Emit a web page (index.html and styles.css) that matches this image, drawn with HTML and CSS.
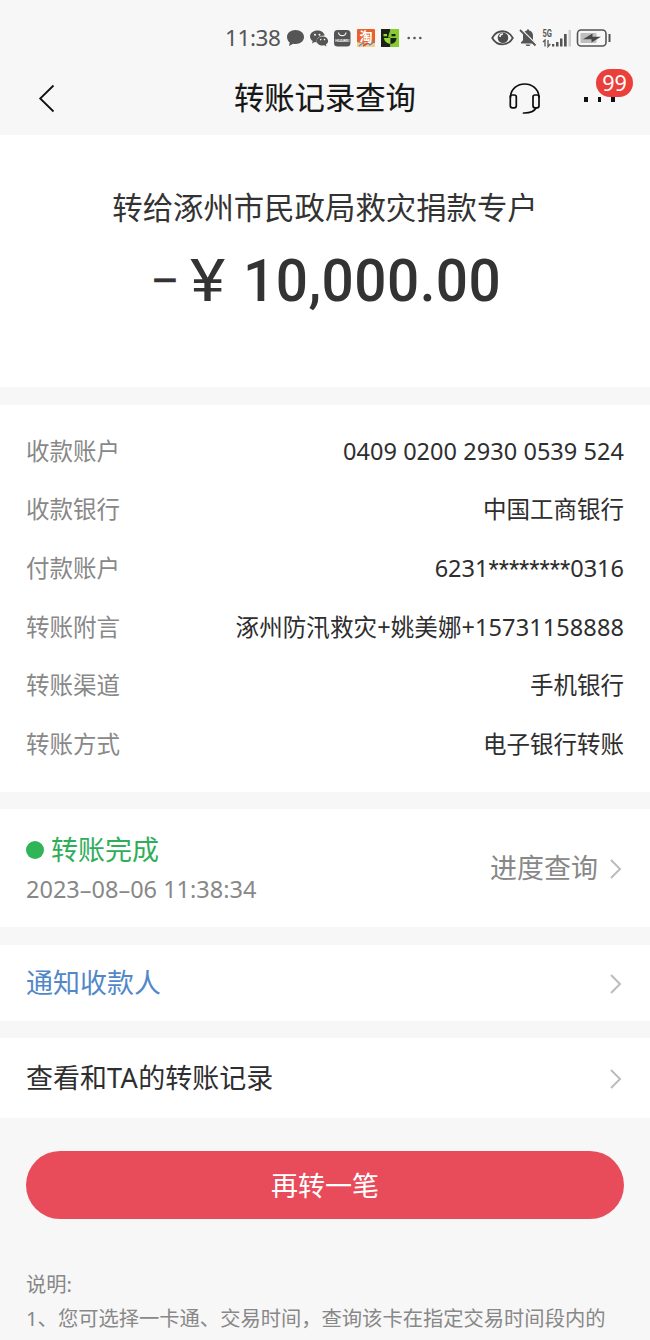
FILE: index.html
```html
<!DOCTYPE html>
<html lang="zh-CN">
<head>
<meta charset="utf-8">
<title>转账记录查询</title>
<link rel="stylesheet" href="styles.css">
</head>
<body>
<main class="screen">
  <header class="top">
    <div class="status">
      <span class="clock">11:38</span>
      <svg class="status-apps" width="140" height="24" viewBox="0 0 140 24">
        <g fill="#555">
          <path d="M9.500 4C4.500 4 1 7.100 1 11c0 2.200 1 4.200 2.700 5.500L3 20l4.200-2.200c.7.200 1.500.2 2.300.2 5 0 8.500-3.100 8.500-7S14.500 4 9.500 4z"/>
          <path d="M31.500 4.500c-4.200 0-7.500 2.600-7.500 6 0 1.900 1 3.500 2.700 4.600l-.7 2.400 2.800-1.400 2 .4c-.9-4.400 2.700-7.300 7.900-7.100-.8-2.900-3.700-4.900-7.200-4.900z"/>
          <path d="M36.500 10.500c-3.400 0-5.800 2-5.800 4.600s2.400 4.500 5.800 4.500l1.800-.3 2.100 1.100-.5-1.900c1.400-.8 2.200-2 2.200-3.400 0-2.600-2.400-4.600-5.600-4.600z"/>
          <rect x="48" y="4" width="16.500" height="16.500" rx="3.500"/>
        </g>
        <g fill="#f7f7f7"><circle cx="29" cy="8.700" r="1"/><circle cx="33.500" cy="8.700" r="1"/><circle cx="34.700" cy="13.600" r=".8"/><circle cx="38.500" cy="13.600" r=".8"/></g>
        <path d="M52.500 6.500c.5 4.200 7 4.200 7.500 0" fill="none" stroke="#f7f7f7" stroke-width="1.200"/>
        <text x="49.300" y="16" class="brand" textLength="14" lengthAdjust="spacingAndGlyphs">HUAWEI</text>
        <rect x="71" y="3" width="18" height="18" rx="1" fill="#e9622d"/>
        <path d="M71 16l4 1 5-1 9 1v4H71z" fill="#f2cf8c"/>
        <path d="M73 20l4-3 2 2 3-2 2 2 4-3" fill="none" stroke="#5a8fc0" stroke-width="1.300"/>
        <path d="M77 20l5-3" stroke="#de4b42" stroke-width="1.500"/>
        <text x="73.500" y="15" class="taobao">淘</text>
        <path d="M95 3h9.500v18H95z" fill="#1d2115"/>
        <path d="M104.500 3h8.500v18h-8.500z" fill="#84cf2f"/>
        <path d="M97.500 8h3.500v2.200h-3.500zM98 12h6.500v6c-3.500-.4-6.300-2.600-6.500-6z" fill="#91dd35"/>
        <path d="M105.500 8h4v2.200h-4zM104.500 12h6c-.2 3.600-2.500 5.800-6 6z" fill="#1d2115"/>
        <path d="M104.500 3l-2.500 8.500h2.500z" fill="#84cf2f"/>
        <g fill="#555"><circle cx="122.700" cy="12" r="1.300"/><circle cx="128.500" cy="12" r="1.300"/><circle cx="134.300" cy="12" r="1.300"/></g>
      </svg>
      <svg class="status-sys" width="122" height="24" viewBox="0 0 122 24">
        <path d="M1.200 12C6 3 17 3 21.800 12 17 20.500 6 20.500 1.200 12z" fill="none" stroke="#4d4d4d" stroke-width="1.800"/>
        <circle cx="12" cy="11.800" r="5.300" fill="#4d4d4d"/>
        <path d="M9 11c0-2 1-3 3-3" stroke="#f7f7f7" stroke-width="1.500" fill="none"/>
        <path d="M30 17.500v-1.300l2-2V9.500c0-3 1.700-4.500 4-5V3.500h2v1c2.500.5 4 2.300 4 5v4.700l2 2v1.300zM34.500 18.500h5c-.4 2-4.600 2-5 0z" fill="#555"/>
        <path d="M30 3l16.500 16.500" stroke="#f7f7f7" stroke-width="1.500"/>
        <path d="M29 4L44.500 19.500" stroke="#555" stroke-width="1.800"/>
        <text x="51.500" y="10.800" class="five-g" textLength="9.500" lengthAdjust="spacingAndGlyphs">5G</text>
        <path d="M54 20.500v-6.500l-2 2M57 14v6.500l2.300-2.500" fill="none" stroke="#555" stroke-width="1.300"/>
        <path d="M61 18h2.300v2.500H61zM65 16h2.500v4.500H65zM69 12.500h2.500v8H69zM73 8h2.700v12.500H73z" fill="#555"/>
        <path d="M77.500 4H80v16.500h-2.500z" fill="#ccc"/>
        <rect x="86.500" y="4" width="28.500" height="16" rx="3.500" fill="none" stroke="#555" stroke-width="1.600"/>
        <rect x="89.500" y="7" width="16" height="10" rx="1" fill="#bebebe"/>
        <path d="M92 13.200l9.500-5.700v3.300h8.500l-9.500 5.700v-3.300z" fill="#484848"/>
        <path d="M118.500 8v8" stroke="#555" stroke-width="2"/>
      </svg>
    </div>
    <nav class="bar">
      <svg class="back" width="18" height="30" viewBox="0 0 18 30"><path d="M15.500 1.500L2.200 14.500l13.300 13" fill="none" stroke="#111" stroke-width="1.800"/></svg>
      <h1 class="title">转账记录查询</h1>
      <svg class="headset" width="34" height="34" viewBox="0 0 34 34">
        <g fill="none" stroke="#0c0c0c" stroke-width="1.700" stroke-linecap="round">
          <path d="M2.500 15v-1C3.500 6.500 9.500 2 16.700 2S29.900 6.500 30.900 14v1"/>
          <rect x="2.300" y="13" width="6" height="12.800" rx="2"/><rect x="25" y="13" width="6" height="12.800" rx="2"/>
          <path d="M28 26c-2.200 4-5.500 5.200-12.500 5"/>
        </g>
      </svg>
      <div class="more"><i></i><i></i><i></i><b class="badge">99</b></div>
    </nav>
  </header>

  <section class="summary">
    <p class="payee">转给涿州市民政局救灾捐款专户</p>
    <p class="amount"><span class="minus">–</span><span class="yen">¥</span><span class="figure">10,000.00</span></p>
  </section>

  <dl class="details">
    <div class="row"><dt>收款账户</dt><dd class="account">0409 0200 2930 0539 524</dd></div>
    <div class="row"><dt>收款银行</dt><dd>中国工商银行</dd></div>
    <div class="row"><dt>付款账户</dt><dd>6231<span class="mask">********</span>0316</dd></div>
    <div class="row"><dt>转账附言</dt><dd class="remark">涿州防汛救灾+姚美娜+15731158888</dd></div>
    <div class="row"><dt>转账渠道</dt><dd>手机银行</dd></div>
    <div class="row"><dt>转账方式</dt><dd>电子银行转账</dd></div>
  </dl>

  <section class="progress">
    <div>
      <p class="state"><i class="dot"></i>转账完成</p>
      <p class="time">2023–08–06 11:38:34</p>
    </div>
    <div class="query"><span>进度查询</span><svg class="chevron" width="14" height="22" viewBox="0 0 14 22"><path d="M1 3l9 9-9 9" fill="none" stroke="#bcbcbc" stroke-width="2"/></svg></div>
  </section>

  <section class="link notify"><span>通知收款人</span><svg class="chevron" width="14" height="22" viewBox="0 0 14 22"><path d="M1 3l9 9-9 9" fill="none" stroke="#bcbcbc" stroke-width="2"/></svg></section>
  <section class="link history"><span>查看和<span class="latin">TA</span>的转账记录</span><svg class="chevron" width="14" height="22" viewBox="0 0 14 22"><path d="M1 3l9 9-9 9" fill="none" stroke="#bcbcbc" stroke-width="2"/></svg></section>

  <button class="again">再转一笔</button>
  <footer class="notes">
    <p>说明:</p>
    <p>1、您可选择一卡通、交易时间，查询该卡在指定交易时间段内的</p>
  </footer>
</main>
</body>
</html>
```
FILE: styles.css
```css
* { box-sizing: border-box; margin: 0; padding: 0; }
body {
  background: #f7f7f7;
  color: #2e2e2e;
  font-family: "Noto Sans", "Noto Sans CJK SC", sans-serif;
}
.screen { width: 650px; height: 1340px; overflow: hidden; display: flex; flex-direction: column; }
.top { height: 135px; flex: none; }
.status { height: 66px; padding: 10px 0 0 225px; display: flex; align-items: center; line-height: 24px; }
.clock { width: 61px; font-size: 22.500px; color: #555; letter-spacing: -.4px; }
.status-apps { flex: none; }
.status-sys { flex: none; margin-left: 65px; }
.brand { font: 700 4.200px Roboto, sans-serif; fill: #f7f7f7; }
.taobao { font: 700 13px "Noto Sans CJK SC", sans-serif; fill: #fff; }
.five-g { font: 700 10px Roboto, sans-serif; fill: #555; }
.bar { height: 66px; display: flex; align-items: center; padding-left: 38px; }
.back { flex: none; }
.title { flex: none; width: 182px; margin-left: 178px; padding-bottom: 3px; font-size: 30.300px; font-weight: 400; line-height: 44px; color: #161616; white-space: nowrap; -webkit-text-stroke: .15px #161616; }
.headset { flex: none; margin-left: 92px; }
.more { position: relative; display: flex; gap: 10px; margin-left: 42px; }
.more i { width: 3.500px; height: 5px; background: #111; }
.badge { position: absolute; left: 12px; top: -28px; width: 37px; height: 28px; border-radius: 14px; background: #ea3f3b; color: #fff; font-size: 21.500px; font-weight: 400; line-height: 28px; text-align: center; }

.summary { flex: none; height: 252px; background: #fff; padding-top: 51px; text-align: center; color: #333; }
.payee { font-size: 30.400px; line-height: 44px; }
.amount { display: flex; height: 76px; margin-top: 13px; padding-left: 151px; line-height: 76px; font-family: Roboto, sans-serif; }
.minus { width: 39px; font-size: 43px; text-align: left; -webkit-text-stroke: .6px #333; }
.yen { width: 53px; font-size: 60px; text-align: left; transform: scaleX(1.120); transform-origin: left; }
.figure { font-size: 60px; font-weight: 500; letter-spacing: .500px; transform: scaleX(.945); transform-origin: left; }

.details { flex: none; height: 387px; margin-top: 18px; padding: 16.500px 26px 0; background: #fff; font-size: 23.500px; }
.row { display: flex; justify-content: space-between; height: 58.700px; line-height: 58.700px; }
.row dt { color: #888; }
.account { letter-spacing: .05px; }
.remark { letter-spacing: .1px; }
.mask { font-family: Roboto, sans-serif; letter-spacing: .1px; }

.progress { flex: none; height: 118px; margin-top: 17px; padding: 0 26px; display: flex; justify-content: space-between; align-items: center; background: #fff; }
.state { display: flex; align-items: center; gap: 7px; font-size: 27px; line-height: 42px; color: #2fae59; }
.dot { width: 18px; height: 18px; border-radius: 50%; background: #2fb457; }
.time { font-size: 23.500px; line-height: 36px; color: #888; }
.query { display: flex; align-items: center; font-size: 27px; color: #888; }
.query span { padding-bottom: 3px; }
.chevron { flex: none; }
.query .chevron { margin-left: 12px; }
.link { flex: none; display: flex; justify-content: space-between; align-items: center; padding: 0 26px; background: #fff; font-size: 27px; line-height: 40px; }
.notify { height: 76px; margin-top: 18px; color: #5288c8; }
.history { height: 80px; margin-top: 17px; }
.latin { letter-spacing: .4px; }
.again { flex: none; height: 68px; margin: 33px 26px 0; border: 0; border-radius: 34px; background: #e84c5a; color: #fff; font: 27px/68px "Noto Sans CJK SC", sans-serif; }
.notes { flex: none; margin: 48px 0 0 26px; font-size: 20.300px; line-height: 34px; color: #888; white-space: nowrap; }
```
